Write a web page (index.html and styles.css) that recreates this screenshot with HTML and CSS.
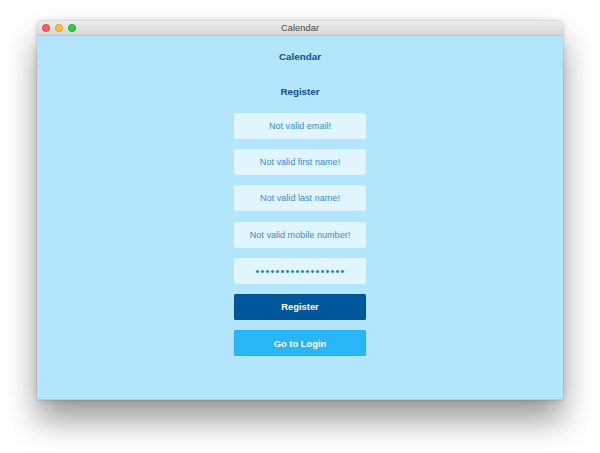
FILE: index.html
```html
<!DOCTYPE html>
<html>
<head>
<meta charset="utf-8">
<link rel="stylesheet" href="styles.css">
</head>
<body>
<div class="window">
  <div class="titlebar">
    <div class="lights">
      <span class="light red"></span>
      <span class="light yellow"></span>
      <span class="light green"></span>
    </div>
    <div class="title">Calendar</div>
  </div>
  <div class="content">
    <div class="heading">Calendar</div>
    <div class="heading sub">Register</div>
    <div class="form">
      <div class="field">Not valid email!</div>
      <div class="field">Not valid first name!</div>
      <div class="field">Not valid last name!</div>
      <div class="field">Not valid mobile number!</div>
      <div class="field dots">••••••••••••••••••</div>
      <div class="btn primary">Register</div>
      <div class="btn secondary">Go to Login</div>
    </div>
  </div>
</div>
</body>
</html>
```

FILE: styles.css
```css
html, body {
  margin: 0;
  padding: 0;
  background: #ffffff;
  width: 600px;
  height: 453px;
  overflow: hidden;
  font-family: "Liberation Sans", Arial, sans-serif;
}
body {
  padding-top: 21px;
  padding-left: 37px;
  box-sizing: border-box;
}
.window {
  width: 526px;
  height: 379px;
  display: flex;
  flex-direction: column;
  border-radius: 4px 4px 0 0;
  box-shadow: 0 20px 32px rgba(0, 0, 0, 0.4), 0 0 6px rgba(0, 0, 0, 0.12), 0 0 0 0.5px rgba(0, 0, 0, 0.12);
  overflow: hidden;
}
.titlebar {
  height: 15px;
  flex: none;
  background: linear-gradient(#ececec, #d6d6d6);
  border-bottom: 1px solid #c2c2c2;
  box-sizing: border-box;
  display: flex;
  align-items: center;
  justify-content: center;
  position: relative;
}
.lights {
  position: absolute;
  left: 5px;
  top: 3px;
  display: flex;
  gap: 5.5px;
}
.light {
  width: 7.5px;
  height: 7.5px;
  border-radius: 50%;
  box-sizing: border-box;
}
.red { background: #fc605c; border: 0.5px solid #e0443e; }
.yellow { background: #fdbc40; border: 0.5px solid #de9f34; }
.green { background: #34c84a; border: 0.5px solid #27aa35; }
.title {
  font-size: 9.4px;
  color: #4a4a4a;
  line-height: 14px;
}
.content {
  flex: 1;
  background: #b3e5fc;
  display: flex;
  flex-direction: column;
  align-items: center;
  padding-top: 15px;
  border-bottom: 1px solid #9fd3ea;
}
.heading {
  font-size: 9.8px;
  font-weight: bold;
  color: #0f4f92;
  line-height: 12px;
  height: 12px;
}
.heading.sub {
  margin-top: 23px;
}
.form {
  margin-top: 15px;
  display: flex;
  flex-direction: column;
  gap: 10.2px;
  width: 132px;
}
.field {
  height: 26px;
  background: #e1f5fe;
  border-radius: 2px;
  color: #3b8ad6;
  font-size: 9.1px;
  display: flex;
  align-items: center;
  justify-content: center;
}
.field.dots {
  font-size: 11px;
  letter-spacing: 1.15px;
  color: #1e7fd8;
  padding-left: 1px;
}
.btn {
  height: 26px;
  border-radius: 2px;
  color: #ffffff;
  font-weight: bold;
  font-size: 9.4px;
  display: flex;
  align-items: center;
  justify-content: center;
}
.primary {
  background: #01579b;
  box-shadow: inset 0 0 0 0.5px #0b4a82;
}
.secondary {
  background: #29b6f6;
  box-shadow: inset 0 0 0 0.5px #22a9e6;
}
```
